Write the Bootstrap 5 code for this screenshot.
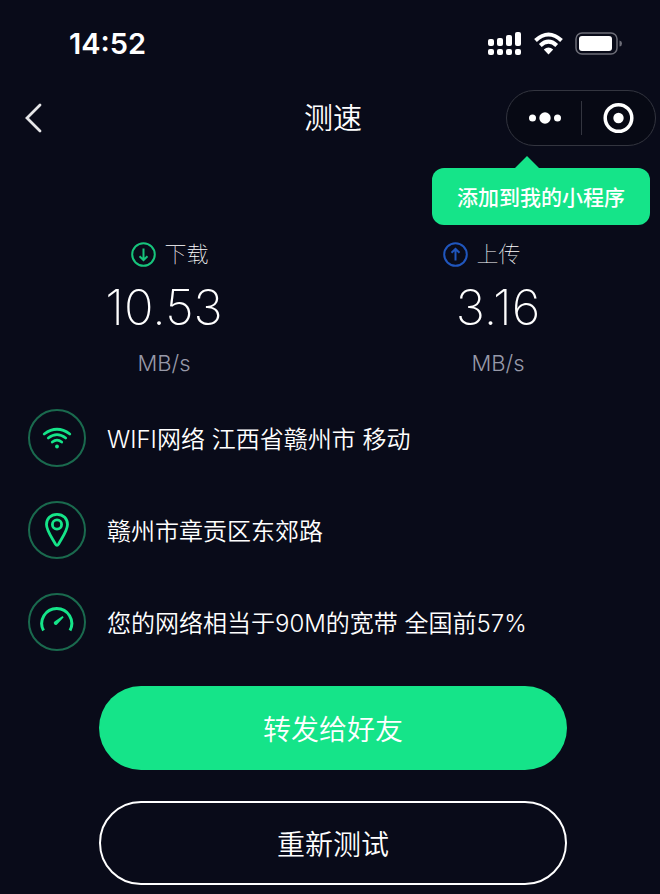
<!DOCTYPE html>
<html lang="zh-CN">
<head>
<meta charset="utf-8">
<meta name="viewport" content="width=device-width, initial-scale=1">
<title>测速</title>
<link rel="stylesheet" href="https://cdn.jsdelivr.net/npm/bootstrap@5.3.0/dist/css/bootstrap.min.css">
<style>
  :root { --ink: #090b19; --green: #15e489; --ring: #1a6a4e; }
  body { background: var(--ink); color: #fff; font-family: Inter, "Noto Sans CJK SC", sans-serif; font-weight: 400; }
  svg { display: block; flex: none; fill: none; }
  .status-bar { height: 88px; padding: 0 38px 0 69px; }
  .clock { font-size: 29px; font-weight: 600; line-height: 40px; }
  .title-bar { height: 60px; padding: 0 4px 0 10px; display: grid; grid-template-columns: 1fr auto 1fr; }
  .page-title { font-size: 29px; font-weight: 350; line-height: 44px; padding-top: 2px; }
  .back-btn, .capsule button { background: none; border: 0; padding: 0; }
  .title-bar .back-btn { padding-left: 10px; }
  .capsule { width: 150px; height: 56px; border: 1px solid #33353f; background: #070914; }
  .capsule button { flex: 1; display: flex; justify-content: center; }
  .capsule-rule { width: 1px; height: 34px; background: #33353f; }
  .tip-row { height: 90px; padding: 20px 10px 0 0; }
  .tip { background: var(--green); border-radius: 12px; padding: 0 25px; height: 57px; font-size: 21px; font-weight: 500; line-height: 60px; }
  .tip-arrow { position: absolute; left: 82px; top: -12px; }
  .stats { padding-left: 2px; gap: 10px; }
  .stat-label { font-size: 22px; font-weight: 100; line-height: 32px; gap: 8px; }
  .label-down { padding-left: 12px; }
  .label-up { padding-right: 32px; }
  .stat-value { font-size: 49px; font-weight: 200; line-height: 76px; }
  .stat-unit { font-size: 22px; font-weight: 300; line-height: 34px; color: #9799a8; }
  .facts { padding: 29px 28px 0; gap: 34px; }
  .fact { gap: 21px; font-size: 24px; font-weight: 350; line-height: 36px; }
  .fact-text { padding-top: 3px; }
  .disc { width: 58px; height: 58px; border: 2px solid var(--ring); flex: none; }
  .actions { padding: 35px 93px 9px 99px; gap: 31px; }
  .actions .btn { height: 84px; font-size: 28px; font-weight: 350; line-height: 40px; padding: 4px 0 0; color: #fff; }
  .btn-share, .btn-share:hover { background: var(--green); border: 0; }
  .btn-retry, .btn-retry:hover { border: 2px solid #fff; }
</style>
</head>
<body>
<header>
  <div class="status-bar d-flex align-items-center justify-content-between">
    <span class="clock">14:52</span>
    <div class="d-flex align-items-center">
      <svg width="34" height="24" viewBox="0 0 34 24" aria-hidden="true"><g fill="#fff"><rect x="0" y="7" width="6" height="7" rx="2"/><rect x="9" y="6" width="6" height="8" rx="2"/><rect x="18" y="3" width="6" height="11" rx="2"/><rect x="27" y="0" width="6" height="14" rx="2"/><rect x="0" y="17" width="6" height="6" rx="2"/><rect x="9" y="17" width="6" height="6" rx="2"/><rect x="18" y="17" width="6" height="6" rx="2"/><rect x="27" y="17" width="6" height="6" rx="2"/></g></svg>
      <svg class="ms-2 me-2" width="36" height="24" viewBox="0 0 36 24" aria-hidden="true"><g transform="translate(4 1)"><path d="M1.500 7.500Q14.500-4.500 27.500 7.500" stroke="#fff" stroke-width="4"/><path d="M6.300 12.500Q14.500 4.800 22.700 12.500" stroke="#fff" stroke-width="4"/><path d="M9.800 16.500Q14.500 12.500 19.200 16.500L14.500 21.500Z" fill="#fff"/></g></svg>
      <svg width="48" height="24" viewBox="0 0 48 24" aria-hidden="true"><rect x="2" y="1" width="41" height="21" rx="6" stroke="#6c6d77" stroke-width="1.500"/><rect x="5" y="4" width="33" height="15" rx="3" fill="#fff"/><path d="M45.500 8.500Q48 9 48 11.500T45.500 14.500Z" fill="#6c6d77"/></svg>
    </div>
  </div>
  <div class="title-bar align-items-center">
    <button class="back-btn text-start" type="button" aria-label="返回"><svg width="26" height="34" viewBox="0 0 26 34"><path d="M20 4L7 17L20 30" stroke="#e6e6e8" stroke-width="2.800" stroke-linecap="round"/></svg></button>
    <h1 class="page-title mb-0">测速</h1>
    <div class="capsule rounded-pill d-flex align-items-center ms-auto">
      <button type="button" aria-label="更多"><svg width="36" height="32" viewBox="0 0 36 32"><g fill="#fff"><circle cx="6.500" cy="16" r="3.500"/><circle cx="19" cy="16" r="5.700"/><circle cx="31.500" cy="16" r="3.500"/></g></svg></button>
      <span class="capsule-rule"></span>
      <button type="button" aria-label="关闭"><svg width="32" height="32" viewBox="0 0 32 32"><circle cx="16.500" cy="16" r="13.300" stroke="#fff" stroke-width="3.500"/><circle cx="16.500" cy="16" r="5.200" fill="#fff"/></svg></button>
    </div>
  </div>
</header>
<main>
  <div class="tip-row d-flex justify-content-end">
    <div class="tip position-relative" role="status">
      <svg class="tip-arrow" width="26" height="13" viewBox="0 0 26 13" aria-hidden="true"><path d="M0 13L13 0L26 13Z" fill="#15e489"/></svg>添加到我的小程序
    </div>
  </div>
  <section class="stats d-flex text-center">
    <div class="col">
      <div class="stat-label label-down d-flex align-items-center justify-content-center">
        <svg width="25" height="25" viewBox="0 0 25 25" stroke="#17c47c" aria-hidden="true"><circle cx="12.500" cy="12.500" r="11.300" stroke-width="2"/><path d="M12.500 6.500V18M8.500 14.200L12.500 18L16.500 14.200" stroke-width="2"/></svg>下载
      </div>
      <div class="stat-value">10.53</div>
      <div class="stat-unit">MB/s</div>
    </div>
    <div class="col">
      <div class="stat-label label-up d-flex align-items-center justify-content-center">
        <svg width="25" height="25" viewBox="0 0 25 25" stroke="#2056bd" aria-hidden="true"><circle cx="12.500" cy="12.500" r="11.300" stroke-width="2"/><path d="M12.500 18.500V7M8.500 10.800L12.500 7L16.500 10.800" stroke-width="2"/></svg>上传
      </div>
      <div class="stat-value">3.16</div>
      <div class="stat-unit">MB/s</div>
    </div>
  </section>
  <section class="facts d-flex flex-column">
    <div class="fact d-flex align-items-center">
      <span class="disc rounded-circle d-flex align-items-center justify-content-center"><svg width="34" height="34" viewBox="0 0 34 34" stroke="#15e489" stroke-width="2.800" stroke-linecap="round" aria-hidden="true"><path d="M4.200 13Q17 3.500 29.800 13M8.300 17Q17 10.200 25.700 17M12.300 21Q17 17.200 21.700 21"/><circle cx="17" cy="25.500" r="1.900" fill="#15e489" stroke="none"/></svg></span>
      <span class="fact-text">WIFI网络 江西省赣州市 移动</span>
    </div>
    <div class="fact d-flex align-items-center">
      <span class="disc rounded-circle d-flex align-items-center justify-content-center"><svg width="34" height="36" viewBox="0 0 34 36" stroke="#15e489" stroke-width="2.800" aria-hidden="true"><circle cx="17" cy="12.500" r="4.600"/><path d="M17 2.300C10.500 2.300 6.500 7 6.500 12.500C6.500 18.500 11.500 25 15.400 32Q17 34.500 18.600 32C22.500 25 27.500 18.500 27.500 12.500C27.500 7 23.500 2.300 17 2.300Z"/></svg></span>
      <span class="fact-text">赣州市章贡区东郊路</span>
    </div>
    <div class="fact d-flex align-items-center">
      <span class="disc rounded-circle d-flex align-items-center justify-content-center"><svg width="36" height="34" viewBox="0 0 36 34" aria-hidden="true"><path d="M4.500 25.500A15 15 0 1 1 31 25.500" stroke="#15e489" stroke-width="3"/><path d="M23.500 11L15.500 16.500A1.800 1.800 0 0 0 18 19.500L24.700 12.200Z" fill="#15e489"/></svg></span>
      <span class="fact-text">您的网络相当于90M的宽带 全国前57%</span>
    </div>
  </section>
  <div class="actions d-flex flex-column">
    <button class="btn btn-share rounded-pill" type="button">转发给好友</button>
    <button class="btn btn-retry rounded-pill" type="button">重新测试</button>
  </div>
</main>
<script src="https://cdn.jsdelivr.net/npm/bootstrap@5.3.0/dist/js/bootstrap.bundle.min.js"></script>
</body>
</html>
